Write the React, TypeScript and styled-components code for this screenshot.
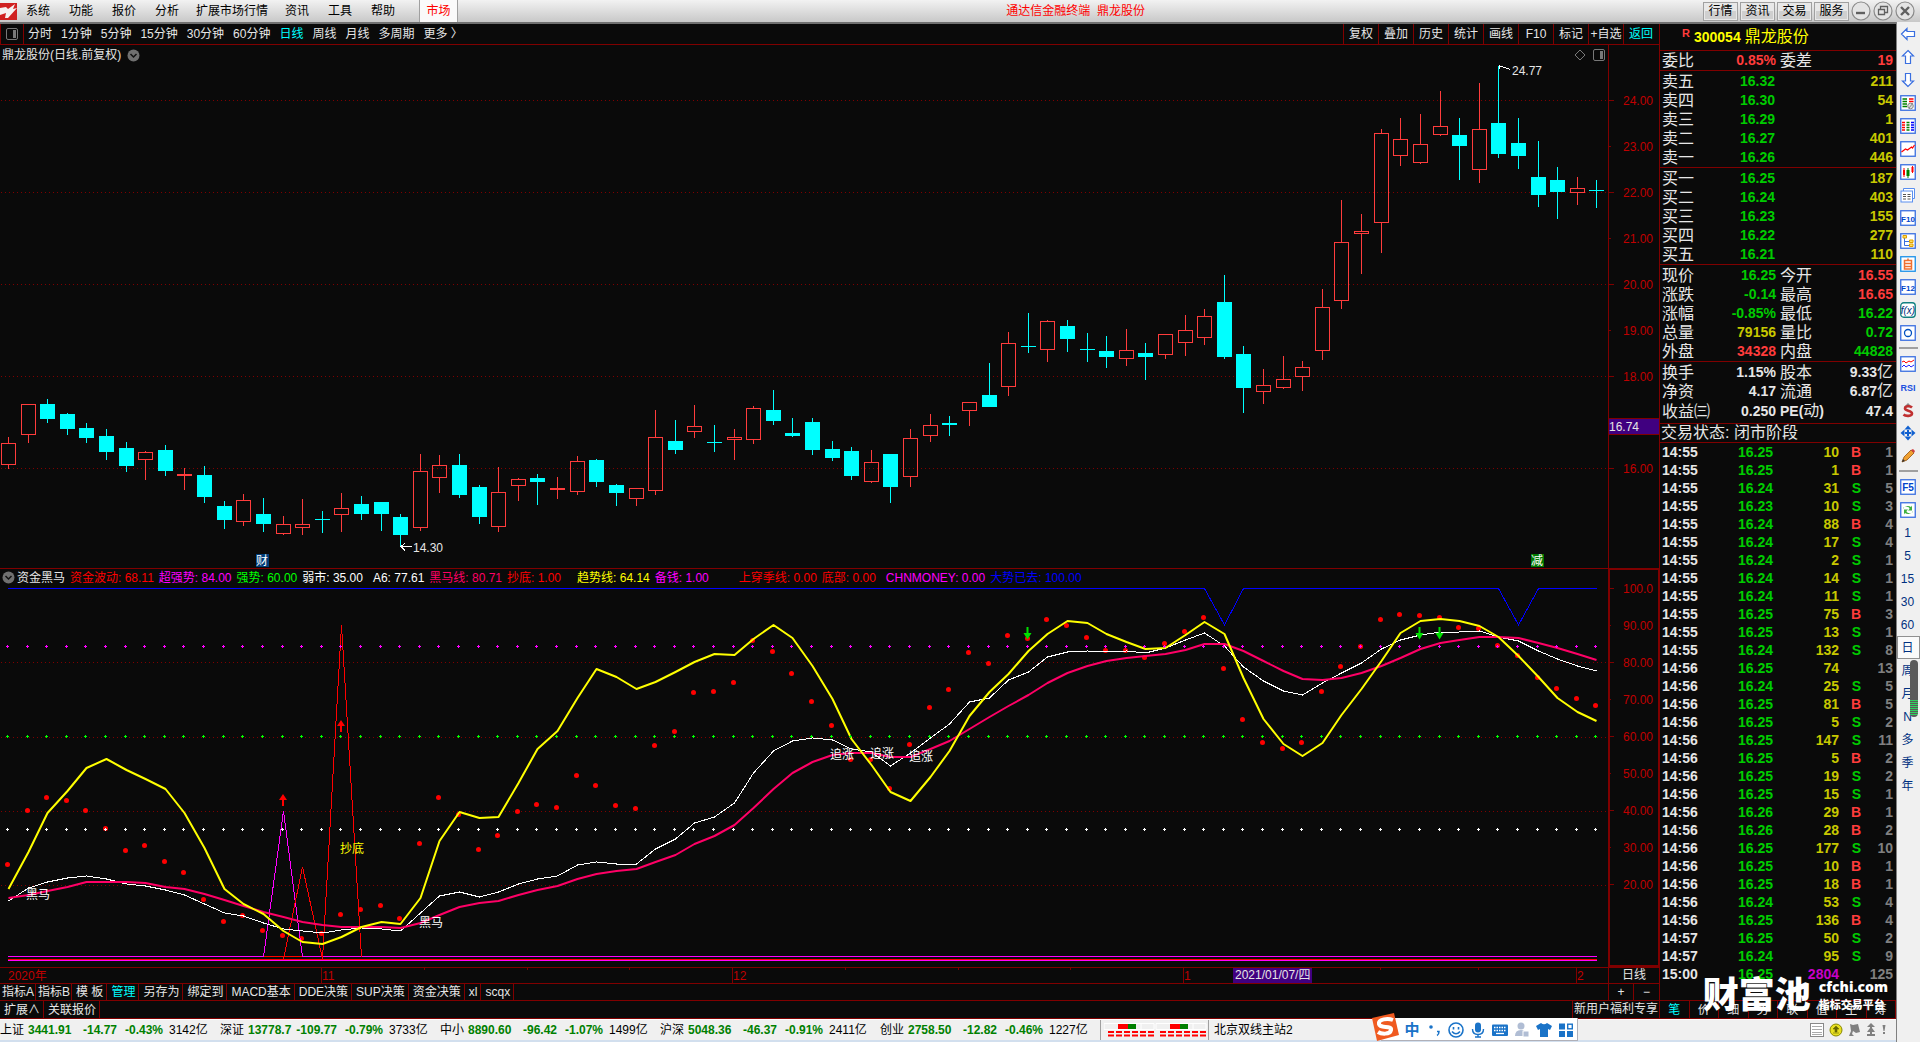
import React from "react";
import styled, { createGlobalStyle } from "styled-components";

const C = {
  bg: "#0a0a0a",
  line: "#800000",
  axis: "#c00000",
  up: "#ff3c3c",
  down: "#00ffff",
  green: "#00cc00",
  yellow: "#c8c800",
  white: "#e6e6e6",
  chrome: "#f0f0f0",
};

const FONT = '"Liberation Sans", "Noto Sans CJK SC", sans-serif';

const GlobalStyle = createGlobalStyle`
  * { box-sizing: border-box; }
  body { margin: 0; background: ${C.bg}; font: 12px/16px ${FONT}; color: ${C.white}; }
  button { font: inherit; color: inherit; background: none; border: 0; padding: 0; margin: 0; white-space: nowrap; cursor: pointer; }
  table { border-collapse: collapse; table-layout: fixed; width: 100%; }
  th, td { padding: 0; font-weight: inherit; text-align: left; white-space: nowrap; }
  svg { display: block; }
`;

/* ---------- window frame ---------- */

const Page = styled.div`
  display: flex;
  flex-direction: column;
  min-height: 100vh;
  background: ${C.bg};
`;

const MenuBar = styled.header`
  display: flex;
  align-items: center;
  height: 24px;
  padding-right: 5px;
  color: #000;
  background: linear-gradient(#f2f2f2, #c8c8c8);
  border-bottom: 2px solid #707070;
`;

const MenuItem = styled.button<{ $wide?: boolean }>`
  padding: 0 ${(p) => (p.$wide ? 7 : 9)}px;
  height: 22px;
`;

const MenuNav = styled.nav`
  display: flex;
  gap: 1px;
  flex: none;
`;

const MarketTab = styled.button`
  margin-left: 15px;
  width: 39px;
  height: 22px;
  color: #f00;
  background: #fafafa;
  border: solid #a0a0a0;
  border-width: 0 1px;
`;

const WindowTitle = styled.h1`
  flex: 1;
  margin: 0;
  padding-right: 10px;
  font-size: 12px;
  font-weight: normal;
  text-align: center;
  color: #f00;
  white-space: pre;
`;

const WindowTools = styled.div`
  display: flex;
  align-items: center;
  gap: 2px;
`;

const ToolButton = styled.button`
  width: 35px;
  height: 19px;
  border: 1px solid #a0a0a0;
  outline: 1px solid #e8e8e8;
  outline-offset: -2px;
  background: linear-gradient(#e8e8e8 50%, #cfcfcf 50%);
`;

const RoundButton = styled.button`
  width: 20px;
  height: 20px;
`;

const Body = styled.div`
  display: flex;
  flex: 1;
`;

const LeftSide = styled.div`
  display: flex;
  flex-direction: column;
  flex: 1;
  min-width: 0;
`;

const Workspace = styled.div`
  display: flex;
`;

const Charts = styled.main`
  flex: 1;
  min-width: 0;
`;

/* ---------- period toolbar ---------- */

const Toolbar = styled.div`
  display: flex;
  align-items: stretch;
  height: 21px;
  border-bottom: 1px solid ${C.line};
`;

const PanelToggle = styled.button`
  display: grid;
  place-items: center;
  width: 24px;
  border: solid ${C.line};
  border-width: 0 1px 0 1px;
`;

const Periods = styled.div`
  display: flex;
  flex: 1;
  gap: 9px;
  padding-left: 4px;
`;

const Period = styled.button<{ $on?: boolean }>`
  color: ${(p) => (p.$on ? C.down : C.white)};
`;

const Action = styled.button<{ $on?: boolean }>`
  width: 35px;
  border-left: 1px solid ${C.line};
  color: ${(p) => (p.$on ? C.down : C.white)};
`;

const Actions = styled.div`
  display: flex;
  padding-right: 1px;
`;

/* ---------- charts ---------- */

const ChartRow = styled.section<{ $divided?: boolean }>`
  display: flex;
  border-top: ${(p) => (p.$divided ? `1px solid ${C.line}` : "0")};
`;

const ChartBody = styled.div`
  flex: 1;
  min-width: 0;
`;

const PriceHeader = styled.div`
  display: flex;
  align-items: center;
  height: 20px;
  padding: 0 3px 0 2px;
  gap: 6px;
`;

const HeaderIcons = styled.div`
  display: flex;
  gap: 7px;
  margin-left: auto;
`;

const IndicatorHeader = styled.div`
  display: flex;
  align-items: center;
  height: 17px;
  padding-left: 2px;
  white-space: nowrap;
`;

const Reading = styled.span<{ $color: string; $gap: number }>`
  color: ${(p) => p.$color};
  margin-left: ${(p) => p.$gap}px;
`;

const Plot = styled.svg<{ $h: number }>`
  width: 100%;
  height: ${(p) => p.$h}px;
  font: 12px ${FONT};
`;

const AxisColumn = styled.div<{ $boxed?: boolean }>`
  width: 51px;
  flex: none;
  border: solid ${C.line};
  border-width: ${(p) => (p.$boxed ? "1px 1px 2px 2px" : "0 0 0 1px")};
`;

const AxisPlot = styled.svg<{ $h: number }>`
  width: 50px;
  height: ${(p) => p.$h}px;
  font: 12px ${FONT};
`;

const DateRow = styled.div`
  display: flex;
  height: 17px;
  border: solid ${C.line};
  border-width: 1px 0;
`;

const SideCell = styled.button<{ $w: number }>`
  width: ${(p) => p.$w}px;
  flex: none;
  border-left: 1px solid ${C.line};
  line-height: 15px;
`;

const TabRow = styled.div<{ $h: number }>`
  display: flex;
  height: ${(p) => p.$h}px;
  border-bottom: 1px solid ${C.line};
`;

const Tab = styled.button<{ $on?: boolean; $tight?: boolean }>`
  padding: ${(p) => (p.$tight ? "0 1px 0 2px" : "0 3px 0 4px")};
  border-right: 1px solid ${C.line};
  color: ${(p) => (p.$on ? C.down : C.white)};
`;

const Spacer = styled.div`
  flex: 1;
`;

/* ---------- quote panel ---------- */

const QuotePanel = styled.aside`
  position: relative;
  display: flex;
  flex-direction: column;
  width: 237px;
  flex: none;
  border-left: 1px solid ${C.line};
`;

const QuoteTitle = styled.div`
  display: flex;
  align-items: center;
  gap: 4px;
  height: 27px;
  padding-left: 22px;
  border-bottom: 1px solid ${C.line};
  color: #ff0;
  font-size: 16px;
`;

const RightsMark = styled.sup`
  align-self: flex-start;
  font-size: 11px;
  font-weight: bold;
  line-height: 18px;
  color: ${C.up};
`;

const Block = styled.div<{ $top?: number; $bottom?: number }>`
  padding: ${(p) => p.$top ?? 0}px 3px ${(p) => p.$bottom ?? 0}px 2px;
  border-bottom: 1px solid ${C.line};
`;

const QRow = styled.tr`
  height: 19px;
`;

const QName = styled.th<{ $w?: number; $inset?: boolean }>`
  width: ${(p) => p.$w ?? 50}px;
  padding-left: ${(p) => (p.$inset ? 4 : 0)}px;
  font-size: 16px;
  line-height: 19px;
`;

const QValue = styled.td<{ $color: string; $w?: number }>`
  width: ${(p) => (p.$w ? p.$w + "px" : "auto")};
  color: ${(p) => p.$color};
  font-size: 14px;
  font-weight: bold;
  line-height: 19px;
  text-align: right;
`;

const Bold = styled.b`
  font-size: 14px;
`;

const Unit = styled.span`
  font-size: 16px;
  font-weight: normal;
  line-height: 16px;
`;

const MarketState = styled.div`
  height: 19px;
  padding-left: 1px;
  border-bottom: 1px solid ${C.line};
  font-size: 16px;
  line-height: 18px;
`;

const TickArea = styled.div`
  flex: 1;
  padding: 0 3px 0 2px;
`;

const TRow = styled.tr`
  height: 18px;
  font-size: 14px;
  font-weight: bold;
  line-height: 18px;
`;

const TCell = styled.td<{ $color: string; $w: number; $left?: boolean }>`
  width: ${(p) => p.$w}px;
  color: ${(p) => p.$color};
  text-align: ${(p) => (p.$left ? "left" : "right")};
`;

const QuoteTabs = styled.div`
  display: grid;
  grid-template-columns: repeat(8, 1fr);
  height: 19px;
  border: solid ${C.line};
  border-width: 1px 0;
`;

const QuoteTab = styled.button<{ $on?: boolean }>`
  border-right: 1px solid ${C.line};
  color: ${(p) => (p.$on ? C.down : C.white)};
`;

const Watermark = styled.div`
  position: absolute;
  right: 8px;
  bottom: 3px;
  display: flex;
  align-items: center;
  gap: 8px;
  color: #fff;
  font-weight: 900;
  pointer-events: none;
`;

const MarkName = styled.span`
  font-size: 36px;
  line-height: 40px;
`;

const MarkSide = styled.span`
  display: flex;
  flex-direction: column;
  font-size: 11px;
  line-height: 18px;
`;

const MarkSite = styled.span`
  font-family: "Open Sans", "Liberation Sans", sans-serif;
  font-size: 14px;
`;

/* ---------- status bar ---------- */

const StatusBar = styled.footer`
  position: relative;
  display: flex;
  align-items: center;
  height: 23px;
  color: #000;
  background: ${C.chrome};
  border-top: 1px solid #fff;
  border-bottom: 2px solid #d2dfee;
  white-space: nowrap;
`;

const IndexQuote = styled.div`
  display: grid;
  grid-template-columns: 28px 47px 42px 46px 57px;
  color: #000;
`;

const IndexNum = styled.b<{ $right?: boolean }>`
  color: #008000;
  text-align: ${(p) => (p.$right ? "right" : "left")};
`;

const IndexVol = styled.span`
  padding-left: 6px;
`;

const Meters = styled.div`
  display: flex;
  align-items: center;
  height: 20px;
  width: 109px;
  padding-left: 3px;
  border: solid #a0a0a0;
  border-width: 0 1px;
`;

const Server = styled.span`
  padding-left: 5px;
`;

const TrayIcons = styled.div`
  display: flex;
  gap: 5px;
  margin-left: auto;
  padding-right: 8px;
`;

const ImeBar = styled.div`
  position: absolute;
  left: 1371px;
  bottom: -1px;
  display: flex;
  align-items: center;
  height: 23px;
  width: 207px;
  padding-left: 33px;
  gap: 6px;
  color: #1a73c8;
`;

const ImeBack = styled.div`
  position: absolute;
  inset: 0 0 0 10px;
  background: #fff;
  border: solid #b0b0b8;
  border-width: 0 1px 1px 0;
`;

const ImeLogo = styled.svg`
  position: absolute;
  left: 0;
  bottom: 0;
`;

const ImeKey = styled.button`
  position: relative;
  display: grid;
  place-items: center;
  width: 16px;
  font-size: 15px;
  font-weight: bold;
`;

/* ---------- right icon strip ---------- */

const Strip = styled.nav`
  position: relative;
  width: 24px;
  flex: none;
  margin-top: -2px;
  background: ${C.chrome};
  border-left: 1px solid #808080;
`;

const StripButton = styled.button<{ $on?: boolean }>`
  display: grid;
  place-items: center;
  width: 23px;
  height: 23px;
  padding-right: 2px;
  color: #003080;
  border: ${(p) => (p.$on ? "1px solid #909090" : "0")};
  background: ${(p) => (p.$on ? "#fafafa" : "none")};
`;

const StripRule = styled.hr`
  height: 2px;
  margin: 3px 2px;
  border: 0;
  background: #a0a0a0;
`;

const Gauge = styled.div`
  position: absolute;
  right: 2px;
  top: 638px;
  width: 8px;
  height: 57px;
  border-radius: 4px;
  background: repeating-linear-gradient(transparent 0 1px, #5a5a5a 1px 2px) 0 40px / 8px 15px no-repeat,
    linear-gradient(#5a5a5a 0 40px, #2fd060 40px 55px, #5a5a5a 55px);
`;

/* ---------- data ---------- */

// r = rising, f = falling; then high, body top, body bottom, low
const CANDLES: [string, number, number, number, number][] = [
  ["r", 437, 443, 465, 468], ["r", 404, 404, 435, 442], ["f", 399, 404, 419, 423], ["f", 413, 414, 429, 435],
  ["f", 423, 428, 438, 443], ["f", 429, 436, 452, 460], ["f", 442, 448, 466, 472], ["r", 451, 452, 460, 479],
  ["f", 445, 450, 471, 476], ["r", 468, 474, 476, 489], ["f", 466, 475, 497, 503], ["f", 501, 506, 520, 529],
  ["r", 494, 500, 522, 525], ["f", 498, 514, 524, 532], ["r", 516, 524, 534, 534], ["r", 499, 524, 528, 534],
  ["f", 511, 519, 520, 533], ["r", 493, 508, 515, 531], ["f", 496, 504, 514, 520], ["f", 502, 502, 514, 531],
  ["f", 514, 517, 535, 546], ["r", 454, 471, 528, 530], ["r", 455, 465, 478, 492], ["f", 454, 465, 495, 498],
  ["f", 485, 487, 517, 524], ["r", 467, 492, 527, 531], ["r", 478, 479, 486, 500], ["f", 474, 478, 482, 505],
  ["r", 477, 488, 490, 498], ["r", 456, 461, 492, 494], ["f", 459, 460, 482, 487], ["f", 484, 485, 493, 506],
  ["r", 488, 488, 499, 505], ["r", 410, 437, 491, 494], ["f", 420, 441, 450, 454], ["r", 405, 426, 432, 437],
  ["f", 425, 442, 443, 452], ["r", 429, 437, 440, 459], ["r", 406, 408, 440, 443], ["f", 390, 410, 421, 425],
  ["f", 418, 433, 436, 437], ["f", 418, 422, 450, 455], ["f", 441, 449, 458, 461], ["f", 447, 451, 476, 480],
  ["r", 450, 462, 482, 482], ["f", 454, 454, 487, 503], ["r", 429, 438, 477, 486], ["r", 414, 425, 436, 441],
  ["f", 416, 423, 425, 436], ["r", 402, 402, 411, 425], ["f", 363, 395, 407, 407], ["r", 332, 343, 387, 395],
  ["f", 313, 346, 347, 353], ["r", 320, 321, 350, 361], ["f", 320, 326, 339, 352], ["f", 333, 349, 350, 362],
  ["f", 336, 351, 357, 368], ["r", 329, 350, 359, 365], ["f", 343, 353, 357, 380], ["r", 334, 334, 355, 358],
  ["r", 315, 330, 343, 355], ["r", 309, 316, 338, 344], ["f", 275, 302, 357, 359], ["f", 346, 354, 388, 413],
  ["r", 369, 385, 392, 403], ["r", 356, 379, 388, 388], ["r", 361, 367, 377, 390], ["r", 289, 307, 351, 359],
  ["r", 200, 242, 301, 308], ["r", 214, 231, 234, 273], ["r", 129, 133, 223, 252], ["r", 118, 139, 156, 165],
  ["r", 114, 144, 163, 163], ["r", 91, 126, 135, 135], ["f", 118, 135, 146, 180], ["r", 83, 129, 170, 182],
  ["f", 66, 123, 154, 158], ["f", 118, 143, 156, 169], ["f", 141, 177, 195, 207], ["f", 167, 180, 192, 219],
  ["r", 177, 188, 193, 204], ["f", 180, 190, 191, 208],
];

const TREND = [
  889, 852, 813, 791, 768, 759, 770, 779, 789, 813, 848, 889, 904, 914, 931, 942, 944, 937, 927, 922, 924, 898, 841,
  812, 818, 817, 783, 749, 731, 698, 669, 677, 689, 682, 672, 662, 654, 655, 639, 625, 638, 666, 699, 739, 765, 792,
  801, 777, 751, 716, 692, 674, 651, 634, 621, 623, 634, 642, 649, 648, 635, 622, 634, 678, 719, 744, 756, 743, 715,
  689, 661, 633, 621, 619, 621, 626, 637, 656, 677, 698, 712, 721,
];

const A6 = [
  901, 888, 882, 878, 876, 879, 884, 886, 890, 895, 904, 913, 916, 923, 929, 931, 933, 930, 928, 929, 931, 913, 896,
  892, 897, 892, 884, 879, 876, 865, 862, 864, 864, 849, 839, 823, 817, 803, 773, 751, 741, 738, 740, 749, 752, 766,
  753, 738, 724, 702, 698, 680, 672, 657, 652, 651, 652, 651, 653, 648, 640, 633, 646, 667, 681, 691, 695, 683, 673,
  663, 649, 640, 635, 632, 632, 631, 637, 641, 651, 659, 666, 671,
];

const HORSE = [
  898, 895, 891, 887, 882, 882, 882, 883, 887, 889, 894, 900, 906, 912, 917, 922, 925, 927, 927, 927, 928, 923, 915,
  907, 903, 901, 895, 890, 886, 879, 874, 871, 869, 862, 855, 844, 836, 825, 808, 789, 773, 762, 755, 753, 753, 757,
  757, 749, 741, 729, 717, 706, 695, 683, 673, 666, 661, 658, 656, 654, 650, 644, 644, 651, 661, 671, 679, 680, 678,
  673, 666, 658, 649, 643, 640, 637, 637, 638, 643, 648, 654, 660,
];

const FLOW = [
  864, 810, 797, 800, 810, 828, 850, 845, 861, 872, 899, 921, 915, 930, 935, 938, 933, 914, 909, 905, 918, 843, 797,
  814, 849, 835, 811, 804, 807, 775, 785, 805, 808, 745, 731, 692, 691, 682, 640, 651, 673, 701, 725, 759, 759, 788,
  744, 707, 689, 652, 663, 635, 638, 619, 625, 637, 650, 650, 657, 643, 631, 617, 668, 719, 742, 748, 742, 691, 666,
  646, 619, 614, 615, 617, 627, 628, 645, 655, 677, 688, 698, 705,
];

const ASKS = [["卖五", "16.32", "211"], ["卖四", "16.30", "54"], ["卖三", "16.29", "1"], ["卖二", "16.27", "401"], ["卖一", "16.26", "446"]];
const BIDS = [["买一", "16.25", "187"], ["买二", "16.24", "403"], ["买三", "16.23", "155"], ["买四", "16.22", "277"], ["买五", "16.21", "110"]];

const STATS: [string, string, string, string, string, string][] = [
  ["现价", "16.25", C.green, "今开", "16.55", C.up],
  ["涨跌", "-0.14", C.green, "最高", "16.65", C.up],
  ["涨幅", "-0.85%", C.green, "最低", "16.22", C.green],
  ["总量", "79156", C.yellow, "量比", "0.72", C.green],
  ["外盘", "34328", C.up, "内盘", "44828", C.green],
];

const TICKS = `14:55 16.25 10 B 1
14:55 16.25 1 B 1
14:55 16.24 31 S 5
14:55 16.23 10 S 3
14:55 16.24 88 B 4
14:55 16.24 17 S 4
14:55 16.24 2 S 1
14:55 16.24 14 S 1
14:55 16.24 11 S 1
14:55 16.25 75 B 3
14:55 16.25 13 S 1
14:55 16.24 132 S 8
14:56 16.25 74 - 13
14:56 16.24 25 S 5
14:56 16.25 81 B 5
14:56 16.25 5 S 2
14:56 16.25 147 S 11
14:56 16.25 5 B 2
14:56 16.25 19 S 2
14:56 16.25 15 S 1
14:56 16.26 29 B 1
14:56 16.26 28 B 2
14:56 16.25 177 S 10
14:56 16.25 10 B 1
14:56 16.25 18 B 1
14:56 16.24 53 S 4
14:56 16.25 136 B 4
14:57 16.25 50 S 2
14:57 16.24 95 S 9
15:00 16.25 2804 - 125`.split("\n").map((l) => l.split(" "));

const INDEXES = [
  ["上证", "3441.91", "-14.77", "-0.43%", "3142亿"],
  ["深证", "13778.7", "-109.77", "-0.79%", "3733亿"],
  ["中小", "8890.60", "-96.42", "-1.07%", "1499亿"],
  ["沪深", "5048.36", "-46.37", "-0.91%", "2411亿"],
  ["创业", "2758.50", "-12.82", "-0.46%", "1227亿"],
];

const READINGS: [string, string, number][] = [
  ["资金波动: 68.11", "#ff0000", 5],
  ["超强势: 84.00", "#ff00ff", 5],
  ["强势: 60.00", "#00ff00", 5],
  ["弱市: 35.00", "#ffffff", 5],
  ["A6: 77.61", "#ffffff", 10],
  ["黑马线: 80.71", "#ff0066", 5],
  ["抄底: 1.00", "#ff0000", 5],
  ["趋势线: 64.14", "#ffff00", 16],
  ["备钱: 1.00", "#ff00ff", 5],
  ["上穿季线: 0.00", "#ff0000", 30],
  ["底部: 0.00", "#ff0000", 5],
  ["CHNMONEY: 0.00", "#ff00ff", 10],
  ["大势已去: 100.00", "#0000ff", 5],
];

/* ---------- drawing helpers ---------- */

const xAt = (i: number) => Math.round(8 + 19.61 * i) + 0.5;
const path = (ys: number[]) => ys.map((y, i) => `${xAt(i)},${y}`).join(" ");

function Grid({ ys }: { ys: number[] }) {
  return (
    <>
      {ys.map((y) => (
        <line key={y} x1="1" x2="1608" y1={y} y2={y} stroke={C.line} strokeDasharray="1 3" />
      ))}
    </>
  );
}

function PriceChart() {
  return (
    <Plot $h={503} viewBox="0 65 1608 503" preserveAspectRatio="none" shapeRendering="crispEdges" role="img" aria-label="日线">
      <Grid ys={[100.5, 192.5, 284.5, 376.5, 468.5]} />
      {CANDLES.map(([kind, hi, top, bot, lo], i) => {
        const x = xAt(i);
        const color = kind === "r" ? C.up : C.down;
        return (
          <g key={i} stroke={color}>
            <line x1={x} x2={x} y1={hi} y2={kind === "r" ? top : lo} />
            {kind === "r" && <line x1={x} x2={x} y1={bot} y2={lo + 0.5} />}
            {kind === "r" ? (
              <rect x={x - 7} y={top + 0.5} width="14" height={Math.max(1, bot - top - 1)} fill="none" />
            ) : (
              <rect x={x - 7.5} y={top} width="15" height={bot - top} fill={color} stroke="none" />
            )}
          </g>
        );
      })}
      <g stroke="#fff" fill="none">
        <path d="M401 546.5h11M405 543l-4 3.5l4 4" />
        <path d="M1499.500 66l11 3.500M1503 64.500h-3.500v4" />
      </g>
      <text x="413" y="552" fill={C.white}>14.30</text>
      <text x="1512" y="75" fill={C.white}>24.77</text>
      <rect x="256" y="554" width="13" height="13" fill="#003c78" />
      <text x="256" y="565" fill="#fff">财</text>
      <rect x="1531" y="554" width="13" height="13" fill="#007800" />
      <text x="1531" y="565" fill="#fff">减</text>
    </Plot>
  );
}

function Arrow({ i, y, down }: { i: number; y: number; down?: boolean }) {
  const x = xAt(i);
  return down ? (
    <path d={`M${x - 2} ${y}h2v6h3l-4 6.500l-4 -6.500h3z`} fill="#00e000" />
  ) : (
    <path d={`M${x - 0.5} ${y}l4 6h-3v6h-2v-6h-3z`} fill="#f00" />
  );
}

function IndicatorChart() {
  const spike = (i: number, base: number, top: number, end = base) =>
    `${xAt(i - 1)},${base} ${xAt(i)},${top} ${xAt(i + 1)},${end}`;
  const levels: [number, string][] = [[646.5, "#ff00ff"], [736.5, "#00ff00"], [829.5, "#ffffff"]];
  return (
    <Plot $h={381} viewBox="0 586 1608 381" preserveAspectRatio="none" role="img" aria-label="资金黑马">
      <g shapeRendering="crispEdges">
        <Grid ys={[662.5, 737.5, 811.5, 885.5]} />
      </g>
      <g fill="#f00">
        {FLOW.map((y, i) => (
          <ellipse key={i} cx={xAt(i) - 1} cy={y + 0.5} rx="2.500" ry="2.500" />
        ))}
      </g>
      <g fill="none" shapeRendering="crispEdges">
        <polyline
          stroke="#0000ff"
          points={`8,588.5 ${xAt(61)},588.5 ${xAt(62)},625 ${xAt(63)},588.5 ${xAt(76)},588.5 ${xAt(77)},625 ${xAt(78)},588.5 ${xAt(81)},588.5`}
        />
        <path d="M8 959.500H1597" stroke="#f00" />
        <path d="M8 960.500H1597" stroke="#f0f" />
        <path d={`M8 956.500H${xAt(13)}M${xAt(15)} 956.500H1597`} stroke="#f0f" />
        <path d={`M${xAt(13)} 956.500H${xAt(15)}`} stroke="#f00" />
        <polyline points={spike(14, 957, 811)} stroke="#f0f" />
        <polyline points={spike(15, 959, 867)} stroke="#f00" />
        <polyline points={spike(17, 959, 625, 957)} stroke="#f00" />
        <polyline points={path(A6)} stroke="#fff" />
      </g>
      <g fill="none" strokeWidth="2" strokeLinejoin="round">
        <polyline points={path(HORSE)} stroke="#ff0066" />
        <polyline points={path(TREND)} stroke="#ffff00" />
      </g>
      <g shapeRendering="crispEdges">
        {levels.map(([y, color]) =>
          CANDLES.map((_, i) => (
            <path key={i} d={`M${xAt(i) - 2.5} ${y}h3m-1.500 -1.500v3`} stroke={color} />
          ))
        )}
      </g>
      <Arrow i={14} y={794} />
      <Arrow i={17} y={720} />
      <Arrow i={52} y={627} down />
      <Arrow i={72} y={627} down />
      <Arrow i={73} y={627} down />
      <g fill="#fff">
        <text x="26" y="899">黑马</text>
        <text x="419" y="927">黑马</text>
        <text x="830" y="759">追涨</text>
        <text x="870" y="758">追涨</text>
        <text x="909" y="761">追涨</text>
      </g>
      <text x="340" y="853" fill="#ff0">抄底</text>
    </Plot>
  );
}

function PriceAxis() {
  const prices = [24, 23, 22, 21, 20, 19, 18, 16];
  return (
    <AxisPlot $h={523} viewBox="1609 45 50 523">
      {[24, 23, 22, 21, 20, 19, 18].map((p) => (
        <path key={p} d={`M1609 ${100.5 + (24 - p) * 46}h${p % 2 ? 2 : 5}`} stroke={C.line} />
      ))}
      {prices.map((p) => (
        <text key={p} x="1653" y={105 + (24 - p) * 46} textAnchor="end" fill={C.axis}>{p}.00</text>
      ))}
      <path d="M1609 468.500h5" stroke={C.line} />
      <rect x="1609" y="419" width="50" height="15" fill="#400080" />
      <path d="M1609 418.500h50M1609 434.500h50" stroke={C.line} />
      <text x="1609" y="431" fill={C.white}>16.74</text>
    </AxisPlot>
  );
}

function IndicatorAxis() {
  const marks = [100, 90, 80, 70, 60, 50, 40, 30, 20];
  return (
    <AxisPlot $h={395} viewBox="1610 570 50 395">
      {marks.map((m) => (
        <g key={m}>
          <path d={`M1610 ${Math.round(959 - m * 3.7) - 0.5}h${(m / 10) % 2 ? 1 : 4}`} stroke={C.line} />
          <text x="1653" y={Math.round(963 - m * 3.7)} textAnchor="end" fill={C.axis}>
            {m === 100 ? "100.0" : m + ".00"}
          </text>
        </g>
      ))}
    </AxisPlot>
  );
}

function DateAxis() {
  return (
    <Plot $h={15} viewBox="0 968 1608 15" preserveAspectRatio="none" shapeRendering="crispEdges">
      <g stroke={C.line}>
        {[321.5, 732.5, 1183.5, 1576.5].map((x) => (
          <path key={x} d={`M${x} 968v15`} />
        ))}
        {[424.5, 527.5, 629.5, 845.5, 958.5, 1070.5, 1380.5, 1478.5].map((x) => (
          <path key={x} d={`M${x} 968v2`} />
        ))}
      </g>
      <rect x="1233" y="968" width="79" height="15" fill="#400080" />
      <g fill={C.axis}>
        <text x="8" y="980">2020年</text>
        <text x="322" y="980">11</text>
        <text x="733" y="980">12</text>
        <text x="1184" y="980">1</text>
        <text x="1577" y="980">2</text>
      </g>
      <text x="1235" y="979" fill={C.white}>2021/01/07/四</text>
    </Plot>
  );
}

const PanelIcon = ({ w = 12 }: { w?: number }) => (
  <svg width={w} height="12" viewBox="0 0 12 12">
    <rect x="0.500" y="0.500" width="11" height="11" rx="1.500" fill="none" stroke="#787878" />
    <rect x="7" y="2" width="3" height="8" fill="#787878" />
  </svg>
);

const FoldIcon = () => (
  <svg width="13" height="13" viewBox="0 0 13 13">
    <circle cx="6.500" cy="6.500" r="6" fill="#707070" />
    <path d="M3.500 5l3 3l3-3" fill="none" stroke="#111" strokeWidth="1.500" />
  </svg>
);

/* ---------- strip icons ---------- */

const Framed = ({ children, color = "#3a6fe0" }: { children: React.ReactNode; color?: string }) => (
  <svg width="16" height="16" viewBox="0 0 16 16">
    <rect x="0.750" y="0.750" width="14.500" height="14.500" fill="#fff" stroke={color} strokeWidth="1.300" />
    {children}
  </svg>
);

const BlockArrow = ({ turn }: { turn: number }) => (
  <svg width="16" height="16" viewBox="0 0 16 16">
    <path
      d="M1.500 8L7 2.500V5.500H14.500V10.500H7V13.500Z"
      transform={`rotate(${turn} 8 8)`}
      fill="#fff"
      stroke="#3a6fe0"
      strokeWidth="1.200"
    />
  </svg>
);

const FrameText = ({ label, color = "#0044cc" }: { label: string; color?: string }) => (
  <text x="8" y="12" textAnchor="middle" fontSize={label.length > 2 ? 8 : 10} fontWeight="bold" fill={color} fontFamily={FONT}>{label}</text>
);

const STRIP: ([string, React.ReactNode] | null)[] = [
  ["后退", <BlockArrow turn={0} />],
  ["上翻", <BlockArrow turn={90} />],
  ["下翻", <BlockArrow turn={270} />],
  ["报价设置", <Framed><g strokeWidth="1.300"><path d="M2.500 4h4.500M2.500 6.500h4.500M2.500 9h4.500M2.500 11.500h4.500" stroke="#008000" /><path d="M9 4h4.500M9 6.500h4.500" stroke="#f00" /></g><circle cx="10.500" cy="11" r="2.800" fill="#ddd" stroke="#888" /><path d="M9 13l4-5" stroke="#888" /></Framed>],
  ["行情表", <Framed><g strokeWidth="1.300"><path d="M2 4.500h3M2 7h3M2 9.500h3M2 12h3" stroke="#f00" /><path d="M6.500 4.500h3M6.500 7h3M6.500 9.500h3M6.500 12h3" stroke="#008000" /><path d="M11 4.500h3M11 7h3M11 9.500h3M11 12h3" stroke="#00f" /></g></Framed>],
  ["分时图", <Framed><path d="M1.500 11l4-3l2 1l4-3l1 1l2-3" stroke="#f00" strokeWidth="1.200" fill="none" /></Framed>],
  ["K线图", <Framed><path d="M4 4v9M12.500 2v7" stroke="#f00" /><path d="M3 6h2v5h-2zM11.500 3h2v5h-2z" fill="#f00" /><path d="M8 4v10" stroke="#008000" /><path d="M6.500 6h3v6h-3z" fill="#008000" /></Framed>],
  ["公告", <svg width="16" height="16" viewBox="0 0 16 16"><path d="M3.500 4V1.500h11V11.500H13" fill="#fff" stroke="#5a8ff0" /><rect x="1" y="4" width="11.500" height="11" fill="#fff" stroke="#5a8ff0" /><path d="M3 7.500h3M7.500 7.500h3M3 9.500h3M7.500 9.500h3M3 12h3M7.500 12h3" stroke="#555" /></svg>],
  ["F10", <Framed><FrameText label="F10" /></Framed>],
  ["板块树", <Framed><path d="M4.500 5v7.500h5M4.500 8.500h5" stroke="#3a6fe0" fill="none" /><path d="M3 2.500h3.500v2.500h-3.500zM9.500 7h3.500v2.500h-3.500zM9.500 11h3.500v2.500h-3.500z" fill="#ffe060" stroke="#e0a000" /></Framed>],
  ["自选", <Framed color="#1a90e8"><path d="M4.500 4.500h7v8.500h-7zM4.500 7.500h7M4.500 10.500h7M8 2.500v2" stroke="#f07030" strokeWidth="1.500" fill="none" /></Framed>],
  ["F12", <Framed><FrameText label="F12" /></Framed>],
  ["公式", <svg width="16" height="16" viewBox="0 0 16 16"><rect x="0.750" y="0.750" width="14.500" height="14.500" rx="3" fill="#fff" stroke="#108080" strokeWidth="1.300" /><text x="8" y="12" textAnchor="middle" fontSize="10" fontStyle="italic" fill="#003080" fontFamily={FONT}>f(x)</text></svg>],
  ["圆", <Framed><circle cx="8" cy="8" r="3.500" fill="none" stroke="#0050c0" strokeWidth="1.300" /></Framed>],
  null,
  ["波动", <Framed><path d="M2 6l2-1l2 2l3-2l2 1l3-2" stroke="#f00" fill="none" /><path d="M2 11l2-2l2 2l3-2l2 2l3-2" stroke="#22f" fill="none" /></Framed>],
  ["RSI", <svg width="16" height="16" viewBox="0 0 16 16"><text x="8" y="12" textAnchor="middle" fontSize="9" fontWeight="bold" fill="#2050e0" fontFamily={FONT}>RSI</text></svg>],
  ["资金", <svg width="16" height="16" viewBox="0 0 16 16"><path d="M4 5l4-4l4 4z" fill="#888" /><path d="M12 5.500C10 3.500 5 4 5 6.500S12 8.500 12 11.500S5.500 14.500 3.500 12.500" stroke="#c03030" strokeWidth="2.600" fill="none" /></svg>],
  ["移动", <svg width="16" height="16" viewBox="0 0 16 16"><path d="M8 0.500l3.500 4h-7zM8 15.500l3.500-4h-7zM0.500 8l4-3.500v7zM15.500 8l-4-3.500v7zM7 5h2v6H7zM5 7h6v2H5z" fill="#1060d0" /></svg>],
  ["画线", <svg width="16" height="16" viewBox="0 0 16 16"><path d="M2 14l2-5l7-7l3 3l-7 7z" fill="#f0a030" stroke="#905010" strokeWidth="0.800" /><path d="M11 2l3 3l1-2l-2-2z" fill="#d04040" /><path d="M2 14l1-3l2 2z" fill="#333" /></svg>],
  null,
  ["F5", <Framed><FrameText label="F5" /></Framed>],
  ["刷新", <Framed><path d="M3 7a5 4 0 0 1 8-2l1-1.500v5H8l1.500-1.500A3 2 0 0 0 3 7zM13 9a5 4 0 0 1-8 2l-1 1.500v-5h4L6.500 9A3 2 0 0 0 13 9z" fill="#40b040" /></Framed>],
  ...["1", "5", "15", "30", "60", "日", "周", "月", "N", "多", "季", "年"].map((t) => [t, t] as [string, React.ReactNode]),
];

/* ---------- page parts ---------- */

function QuoteTable({ rows }: { rows: string[][] }) {
  return (
    <table>
      <tbody>
        {rows.map(([n, p, v]) => (
          <QRow key={n}>
            <QName scope="row">{n}</QName>
            <QValue $color={C.green} $w={63}>{p}</QValue>
            <QValue $color={C.yellow}>{v}</QValue>
          </QRow>
        ))}
      </tbody>
    </table>
  );
}

function PairRow({ a, av, ac, b, bv, bc }: { a: React.ReactNode; av: string; ac: string; b: React.ReactNode; bv: React.ReactNode; bc: string }) {
  return (
    <QRow>
      <QName scope="row">{a}</QName>
      <QValue $color={ac} $w={64}>{av}</QValue>
      <QName $inset scope="row">{b}</QName>
      <QValue $color={bc}>{bv}</QValue>
    </QRow>
  );
}

function Quote() {
  return (
    <QuotePanel>
      <QuoteTitle>
        <RightsMark>R</RightsMark>
        <Bold>300054</Bold>
        <span>鼎龙股份</span>
      </QuoteTitle>
      <Block>
        <table><tbody><PairRow a="委比" av="0.85%" ac={C.up} b="委差" bv="19" bc={C.up} /></tbody></table>
      </Block>
      <Block $top={1}><QuoteTable rows={ASKS} /></Block>
      <Block $top={1}><QuoteTable rows={BIDS} /></Block>
      <Block $top={1}>
        <table>
          <tbody>
            {STATS.map(([a, av, ac, b, bv, bc]) => (
              <PairRow key={a} {...{ a, av, ac, b, bv, bc }} />
            ))}
          </tbody>
        </table>
      </Block>
      <Block $top={1} $bottom={2}>
        <table>
          <tbody>
            <PairRow a="换手" av="1.15%" ac={C.white} b="股本" bv={<>9.33<Unit>亿</Unit></>} bc={C.white} />
            <PairRow a="净资" av="4.17" ac={C.white} b="流通" bv={<>6.87<Unit>亿</Unit></>} bc={C.white} />
            <PairRow a="收益㈢" av="0.250" ac={C.white} b={<><Bold>PE(</Bold>动<Bold>)</Bold></>} bv="47.4" bc={C.white} />
          </tbody>
        </table>
      </Block>
      <MarketState>交易状态: 闭市阶段</MarketState>
      <TickArea>
        <table>
          <tbody>
            {TICKS.map(([time, price, vol, side, n], i) => (
              <TRow key={i}>
                <TCell $w={50} $left $color={C.white}>{time}</TCell>
                <TCell $w={61} $color={C.green}>{price}</TCell>
                <TCell $w={66} $color={vol === "2804" ? "#c800c8" : C.yellow}>{vol}</TCell>
                <TCell $w={22} $color={side === "B" ? C.up : C.green}>{side === "-" ? "" : side}</TCell>
                <TCell $w={32} $color="#808080">{n}</TCell>
              </TRow>
            ))}
          </tbody>
        </table>
      </TickArea>
      <QuoteTabs>
        {[..."笔价细势联值主筹"].map((t, i) => (
          <QuoteTab key={t} $on={i === 0}>{t}</QuoteTab>
        ))}
      </QuoteTabs>
      <Watermark>
        <MarkName>财富池</MarkName>
        <MarkSide>
          <MarkSite>cfchi.com</MarkSite>
          <span>指标交易平台</span>
        </MarkSide>
      </Watermark>
    </QuotePanel>
  );
}

function Status() {
  return (
    <StatusBar>
      {INDEXES.map(([name, v, d, pct, vol]) => (
        <IndexQuote key={name}>
          <span>{name}</span>
          <IndexNum>{v}</IndexNum>
          <IndexNum $right>{d}</IndexNum>
          <IndexNum $right>{pct}</IndexNum>
          <IndexVol>{vol}</IndexVol>
        </IndexQuote>
      ))}
      <Meters>
        <svg width="103" height="16" viewBox="0 0 103 16">
          {[0, 52].map((o) => (
            <g key={o}>
              <path d={`M${o} 1.500h50v6h-50zM${o + 37} 1.500v6`} fill="none" stroke="#fff" />
              <rect x={o + 14} y="2" width="10" height="5" fill="#f00" />
              <rect x={o + 24} y="2" width="8" height="5" fill="#008000" />
              <path d={`M${o + 4} 10h47M${o + 4} 13.500h47`} stroke="#f00" strokeWidth="2" strokeDasharray="6 2" />
            </g>
          ))}
        </svg>
      </Meters>
      <Server>北京双线主站2</Server>
      <TrayIcons>
        <svg width="14" height="14" viewBox="0 0 14 14"><rect x="0.500" y="0.500" width="13" height="13" fill="#fff" stroke="#888" /><path d="M2 3.500h10M2 6.500h10M2 9.500h10M2 11.500h10" stroke="#aaa" /></svg>
        <svg width="14" height="14" viewBox="0 0 14 14"><circle cx="7" cy="7" r="6" fill="#e8e020" stroke="#888800" /><path d="M7 3l3 3H8v3H6V6H4zM4 10h6" fill="#666600" stroke="#666600" strokeWidth="0.600" /></svg>
        <svg width="14" height="14" viewBox="0 0 14 14"><path d="M2 1l3 1l5-1l2 8l-4 1l-3-2l-1 3l2 2H1l2-5z" fill="#808080" /></svg>
        <svg width="8" height="14" viewBox="0 0 8 14"><path d="M4 0l4 4H5v1l3 4H5v2h3v2H0v-2h3V9H0l3-4V4H0z" fill="#808080" /></svg>
        <svg width="8" height="14" viewBox="0 0 8 14"><path d="M2.500 2h3l-1 6h-1zM3 9h2v2H3z" fill="#808080" /></svg>
      </TrayIcons>
      <ImeBar>
        <ImeBack />
        <ImeLogo width="28" height="28" viewBox="0 0 28 28">
          <path d="M1 5L23 0l5 22L6 28z" fill="#f05a20" />
          <path d="M22 7C17 5 7 6 8 11S21 12 20 17S10 21 7 19" fill="none" stroke="#fff" strokeWidth="4" />
        </ImeLogo>
        <ImeKey>中</ImeKey>
        <ImeKey aria-label="标点"><svg width="16" height="16" viewBox="0 0 16 16"><circle cx="5" cy="5" r="1.800" fill="#1a73c8" /><path d="M11 9.500l2 0q0 3-2 4" stroke="#1a73c8" strokeWidth="1.500" fill="none" /></svg></ImeKey>
        <ImeKey aria-label="表情"><svg width="16" height="16" viewBox="0 0 16 16" fill="none" stroke="#1a73c8" strokeWidth="1.600"><circle cx="8" cy="8" r="7" /><path d="M5.500 5v2.500M10.500 5v2.500M4 9.500q4 4.500 8 0" /></svg></ImeKey>
        <ImeKey aria-label="语音"><svg width="16" height="16" viewBox="0 0 16 16"><rect x="5" y="0.500" width="6" height="10" rx="3" fill="#1a73c8" /><path d="M2.500 7q0 5.500 5.500 5.500t5.500-5.500M8 12v3.500M5 15h6" stroke="#1a73c8" strokeWidth="1.400" fill="none" /></svg></ImeKey>
        <ImeKey aria-label="键盘"><svg width="16" height="16" viewBox="0 0 16 16"><rect x="0" y="2.500" width="16" height="11.500" rx="1" fill="#1a73c8" /><path d="M2 5.500h12M2 8.500h12" stroke="#fff" strokeWidth="1.500" strokeDasharray="1.500 1" /><path d="M4 11.500h8" stroke="#fff" strokeWidth="1.300" /></svg></ImeKey>
        <ImeKey aria-label="账号"><svg width="16" height="16" viewBox="0 0 16 16" fill="#b0bdd4"><circle cx="7" cy="4" r="3.500" /><path d="M1 14q0-6 6-6q3 0 4 1.500v4.500z" /><path d="M9 9h6v6H9z" stroke="#fff" /></svg></ImeKey>
        <ImeKey aria-label="皮肤"><svg width="16" height="16" viewBox="0 0 16 16" fill="#1a73c8"><path d="M5 1q3 2.500 6 0l5 3l-2 4l-2-1v8H4V7L2 8L0 4z" /></svg></ImeKey>
        <ImeKey aria-label="工具箱"><svg width="16" height="16" viewBox="0 0 16 16" fill="#1a73c8"><path d="M1 1.500h6v6H1zM1 9h6v6H1zM9 9h6v6H9z" /><rect x="9.700" y="2.200" width="4.600" height="4.600" fill="none" stroke="#1a73c8" strokeWidth="1.400" /></svg></ImeKey>
      </ImeBar>
    </StatusBar>
  );
}

export default function App() {
  return (
    <Page>
      <GlobalStyle />
      <MenuBar>
        <svg width="17" height="17" viewBox="0 0 17 17">
          <rect width="17" height="17" fill="#d02020" />
          <path d="M0 5L6 4L8 6L15 1L13 6L17 5L8 15L5 15L6 10L0 12z" fill="#f6f0f0" />
        </svg>
        <MenuNav>
          {["系统", "功能", "报价", "分析", "扩展市场行情", "资讯", "工具", "帮助"].map((t) => (
            <MenuItem key={t} $wide={t.length > 2}>{t}</MenuItem>
          ))}
        </MenuNav>
        <MarketTab>市场</MarketTab>
        <WindowTitle>通达信金融终端  鼎龙股份</WindowTitle>
        <WindowTools>
          {["行情", "资讯", "交易", "服务"].map((t) => (
            <ToolButton key={t}>{t}</ToolButton>
          ))}
          {["M5 12h9", "M7.500 8V5.500h7v6H12M5.500 8.500h6v5h-6z", "M6 6l8 8M14 6l-8 8"].map((d, i) => (
            <RoundButton key={d} aria-label={["最小化", "还原", "关闭"][i]}>
              <svg width="20" height="20" viewBox="0 0 20 20" fill="none">
                <circle cx="10" cy="10" r="9" fill="#e4e4e4" stroke="#8a8a8a" strokeWidth="1.200" />
                <path d={d} stroke="#606060" strokeWidth={i === 1 ? 1.3 : 2.4} />
              </svg>
            </RoundButton>
          ))}
        </WindowTools>
      </MenuBar>
      <Body>
        <LeftSide>
          <Workspace>
            <Charts>
              <Toolbar>
                <PanelToggle aria-label="侧栏"><PanelIcon /></PanelToggle>
                <Periods>
                  {["分时", "1分钟", "5分钟", "15分钟", "30分钟", "60分钟", "日线", "周线", "月线", "多周期", "更多 〉"].map((t) => (
                    <Period key={t} $on={t === "日线"}>{t}</Period>
                  ))}
                </Periods>
                <Actions>
                  {["复权", "叠加", "历史", "统计", "画线", "F10", "标记", "+自选", "返回"].map((t) => (
                    <Action key={t} $on={t === "返回"}>{t}</Action>
                  ))}
                </Actions>
              </Toolbar>
              <ChartRow>
                <ChartBody>
                  <PriceHeader>
                    <span>鼎龙股份(日线.前复权)</span>
                    <FoldIcon />
                    <HeaderIcons>
                      <svg width="12" height="12" viewBox="0 0 12 12"><path d="M6 1l5 5l-5 5l-5-5z" fill="none" stroke="#787878" /></svg>
                      <PanelIcon />
                    </HeaderIcons>
                  </PriceHeader>
                  <PriceChart />
                </ChartBody>
                <AxisColumn><PriceAxis /></AxisColumn>
              </ChartRow>
              <ChartRow $divided>
                <ChartBody>
                  <IndicatorHeader>
                    <FoldIcon />
                    <Reading $color={C.white} $gap={2}>资金黑马</Reading>
                    {READINGS.map(([t, color, gap]) => (
                      <Reading key={t} $color={color} $gap={gap}>{t}</Reading>
                    ))}
                  </IndicatorHeader>
                  <IndicatorChart />
                </ChartBody>
                <AxisColumn $boxed><IndicatorAxis /></AxisColumn>
              </ChartRow>
              <DateRow>
                <ChartBody><DateAxis /></ChartBody>
                <SideCell $w={51}>日线</SideCell>
              </DateRow>
              <TabRow $h={17}>
                {["指标A", "指标B", "模 板", "管理", "另存为", "绑定到", "MACD基本", "DDE决策", "SUP决策", "资金决策", "xl", "scqx"].map((t) => (
                  <Tab key={t} $on={t === "管理"} $tight={t.startsWith("指标")}>{t}</Tab>
                ))}
                <Spacer />
                <SideCell $w={25}>+</SideCell>
                <SideCell $w={26}>−</SideCell>
              </TabRow>
              <TabRow $h={18}>
                <Tab>扩展∧</Tab>
                <Tab>关联报价</Tab>
                <Spacer />
                <SideCell $w={87}>新用户福利专享</SideCell>
              </TabRow>
            </Charts>
            <Quote />
          </Workspace>
          <Status />
        </LeftSide>
        <Strip>
          {STRIP.map((item, i) =>
            item ? (
              <StripButton key={i} $on={item[0] === "日"} aria-label={item[0]}>{item[1]}</StripButton>
            ) : (
              <StripRule key={i} />
            )
          )}
          <Gauge />
        </Strip>
      </Body>
    </Page>
  );
}
